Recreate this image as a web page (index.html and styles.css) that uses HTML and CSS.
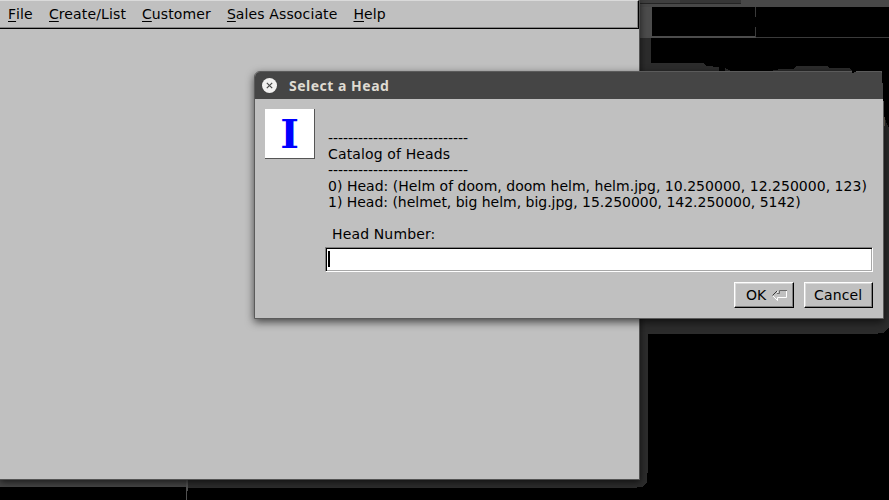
FILE: index.html
```html
<!DOCTYPE html>
<html lang="en">
<head>
<meta charset="utf-8">
<title>Select a Head</title>
<link rel="stylesheet" href="styles.css">
</head>
<body>
<main class="desktop">
  <svg class="backdrop" width="889" height="500" viewBox="0 0 889 500" shape-rendering="crispEdges" aria-hidden="true">
    <rect width="889" height="500" fill="#000"/>
    <path d="M640 0H651V63H704L706 66L719 67V72H725V69L731 72H770L780 69H793L796 66H827L830 68H850L853 72H882V90H640Z" fill="#2c2c2c"/>
    <path d="M651 38H889V72H853L850 68H830L827 66H796L793 69H780L770 72H731L725 69V72H719V67L706 66L704 63H651Z" fill="#000"/>
    <path d="M725 68L731 71H770L780 69H793L796 67H827L830 68H850V72H725Z" fill="#2c2c2c"/>
    <path d="M733 70H767V71H733Z" fill="#000"/>
    <path d="M640 0H889V7H640Z" fill="#484848"/>
    <path d="M640 0H741V3H640Z" fill="#3f3f3f"/>
    <path d="M680 0H741V4H680Z" fill="#363636"/>
    <path d="M640 3H741V4H640Z" fill="#242424"/>
    <path d="M640 7H652V38H640Z" fill="#4c4c4c"/>
    <path d="M652 8H755V36H652Z" fill="#000"/>
    <path d="M652 36H756V38H652Z" fill="#4c4c4c"/>
    <path d="M755 7H756V17H755ZM755 27H756V37H755ZM756 37H889V38H756Z" fill="#3a3a3a"/>
    <path d="M640 319H648V473H647V482L642 487H637V488H187V480H640Z" fill="#2c2c2c"/>
    <path d="M640 319V334H876L879 333H883L889 327V128L884 117V319Z" fill="#2c2c2c"/>
    <path d="M0 480H186V487H0Z" fill="#444"/>
    <path d="M186 480H187V500H186ZM187 480H188V491H187Z" fill="#505050"/>
    <path d="M884 117H885V126H884Z" fill="#72685a"/>
  </svg>

  <section class="window">
    <nav class="menubar">
      <span><u>F</u>ile</span>
      <span><u>C</u>reate/List</span>
      <span><u>C</u>ustomer</span>
      <span><u>S</u>ales Associate</span>
      <span><u>H</u>elp</span>
    </nav>
  </section>

  <section class="dialog">
    <header class="titlebar">
      <svg class="close" width="15" height="15" viewBox="0 0 15 15"><circle cx="7.5" cy="7.5" r="7.5" fill="#f2f1f0"/><path d="M4.8 4.8l5.4 5.4M10.2 4.8l-5.4 5.4" stroke="#484848" stroke-width="1.2"/></svg>
      <h1>Select a Head</h1>
    </header>
    <div class="content">
      <div class="badge">I</div>
      <div class="form">
        <div class="message"><span class="rule">----------------------------</span>
<span class="loose">Catalog of Heads</span>
<span class="rule">----------------------------</span>
<span class="first">0) Head: (Helm of doom, doom helm, helm.jpg, 10.250000, 12.250000, 123)</span>
<span class="second">1) Head: (helmet, big helm, big.jpg, 15.250000, 142.250000, 5142)</span>

<span class="prompt loose">Head Number:</span></div>
        <div class="field"><i class="caret"></i></div>
        <div class="actions">
          <div class="button ok">OK
            <svg width="17" height="12" viewBox="0 0 17 12" fill="none"><path d="M1.5 6.5L6.5 11.5V8.5H15.5V1.5" stroke="#fff"/><path d="M1.5 6.5L6.5 1.5" stroke="#333"/><path d="M6.5 1.5V4.5" stroke="#e8e8e8"/><path d="M6 4.5H8.5V1.5H16" stroke="#6a6a6a"/></svg>
          </div>
          <div class="button cancel">Cancel</div>
        </div>
      </div>
    </div>
  </section>
  <svg class="edge" width="35" height="30" viewBox="0 0 35 30" shape-rendering="crispEdges" aria-hidden="true"><path d="M-2 0H4V1H2V2H-1V1H-2ZM30 0H35V30H31V12H30Z" fill="#000"/></svg>
</main>
</body>
</html>
```

FILE: styles.css
```css
* { box-sizing: border-box; }

body {
  margin: 0;
  overflow: hidden;
  background: #000;
  color: #000;
  font: 14px/16px "DejaVu Sans", sans-serif;
}

.desktop {
  position: relative;
  width: 889px;
  height: 500px;
  overflow: hidden;
}

.backdrop { display: block; }

.window {
  position: absolute;
  left: 0;
  top: 0;
  width: 640px;
  height: 480px;
  background: #c0c0c0;
  border: solid #535353;
  border-width: 0 1px 1px 0;
  box-shadow: 0 2px 7px rgba(0, 0, 0, .65);
}

.menubar {
  display: flex;
  gap: 16px;
  height: 29px;
  padding: 5px 0 0 8px;
  border: solid #000;
  border-width: 1px 1px 1px 0;
  border-top-color: #dadada;
  box-shadow: inset -1px -1px #858585;
  letter-spacing: .13px;
}

.menubar span:first-child { width: 25px; }

.menubar u {
  letter-spacing: 0;
  text-decoration-thickness: 1px;
  text-underline-offset: 2px;
}

.dialog {
  position: absolute;
  left: 254px;
  top: 71px;
  width: 630px;
  height: 248px;
  background: #c0c0c0;
  border: 1px solid #5b5b5b;
  border-radius: 6px 3px 0 0;
  box-shadow: 0 3px 9px rgba(0, 0, 0, .65);
}

.titlebar {
  display: flex;
  align-items: center;
  gap: 12px;
  height: 27px;
  padding-left: 7px;
  border-radius: 5px 2px 0 0;
  background: #454545;
}

.titlebar h1 {
  margin: 0;
  color: #dfdbd2;
  font: bold 14px/18px "Noto Sans", sans-serif;
  letter-spacing: .5px;
}

.content {
  display: flex;
  gap: 10px;
  padding: 10px;
}

.badge {
  flex: none;
  width: 50px;
  height: 50px;
  background: #fff;
  border: solid #555;
  border-width: 0 1px 1px 0;
  color: #00f;
  font: bold 40px/49px "DejaVu Serif", serif;
  text-align: center;
}

.form { flex: 1; }

.message {
  padding: 21px 0 0 3px;
  white-space: pre;
}

.rule { letter-spacing: -.05px; }
.loose { letter-spacing: .14px; }
.first { letter-spacing: .025px; }
.second { letter-spacing: -.02px; }
.prompt { padding-left: 4px; }

.field {
  height: 25px;
  margin-top: 5px;
  padding: 3px 2px;
  background: #fff;
  border: 1px solid;
  border-color: #808080 #fff #fff #808080;
  box-shadow: inset 1px 1px #000, inset -1px -1px #a8a8a8;
}

.caret {
  display: block;
  width: 2px;
  height: 16px;
  background: #000;
}

.actions {
  display: flex;
  justify-content: flex-end;
  gap: 10px;
  margin-top: 10px;
}

.button {
  display: flex;
  align-items: center;
  height: 26px;
  border: 1px solid;
  border-color: #fff #000 #000 #fff;
  box-shadow: inset -1px -1px #808080, inset 1px 1px #dadada;
}

.ok {
  width: 60px;
  gap: 5px;
  padding-left: 11px;
}

.cancel {
  width: 69px;
  padding-left: 9px;
  letter-spacing: .15px;
}

.edge {
  position: absolute;
  left: 852px;
  top: 71px;
}
```
